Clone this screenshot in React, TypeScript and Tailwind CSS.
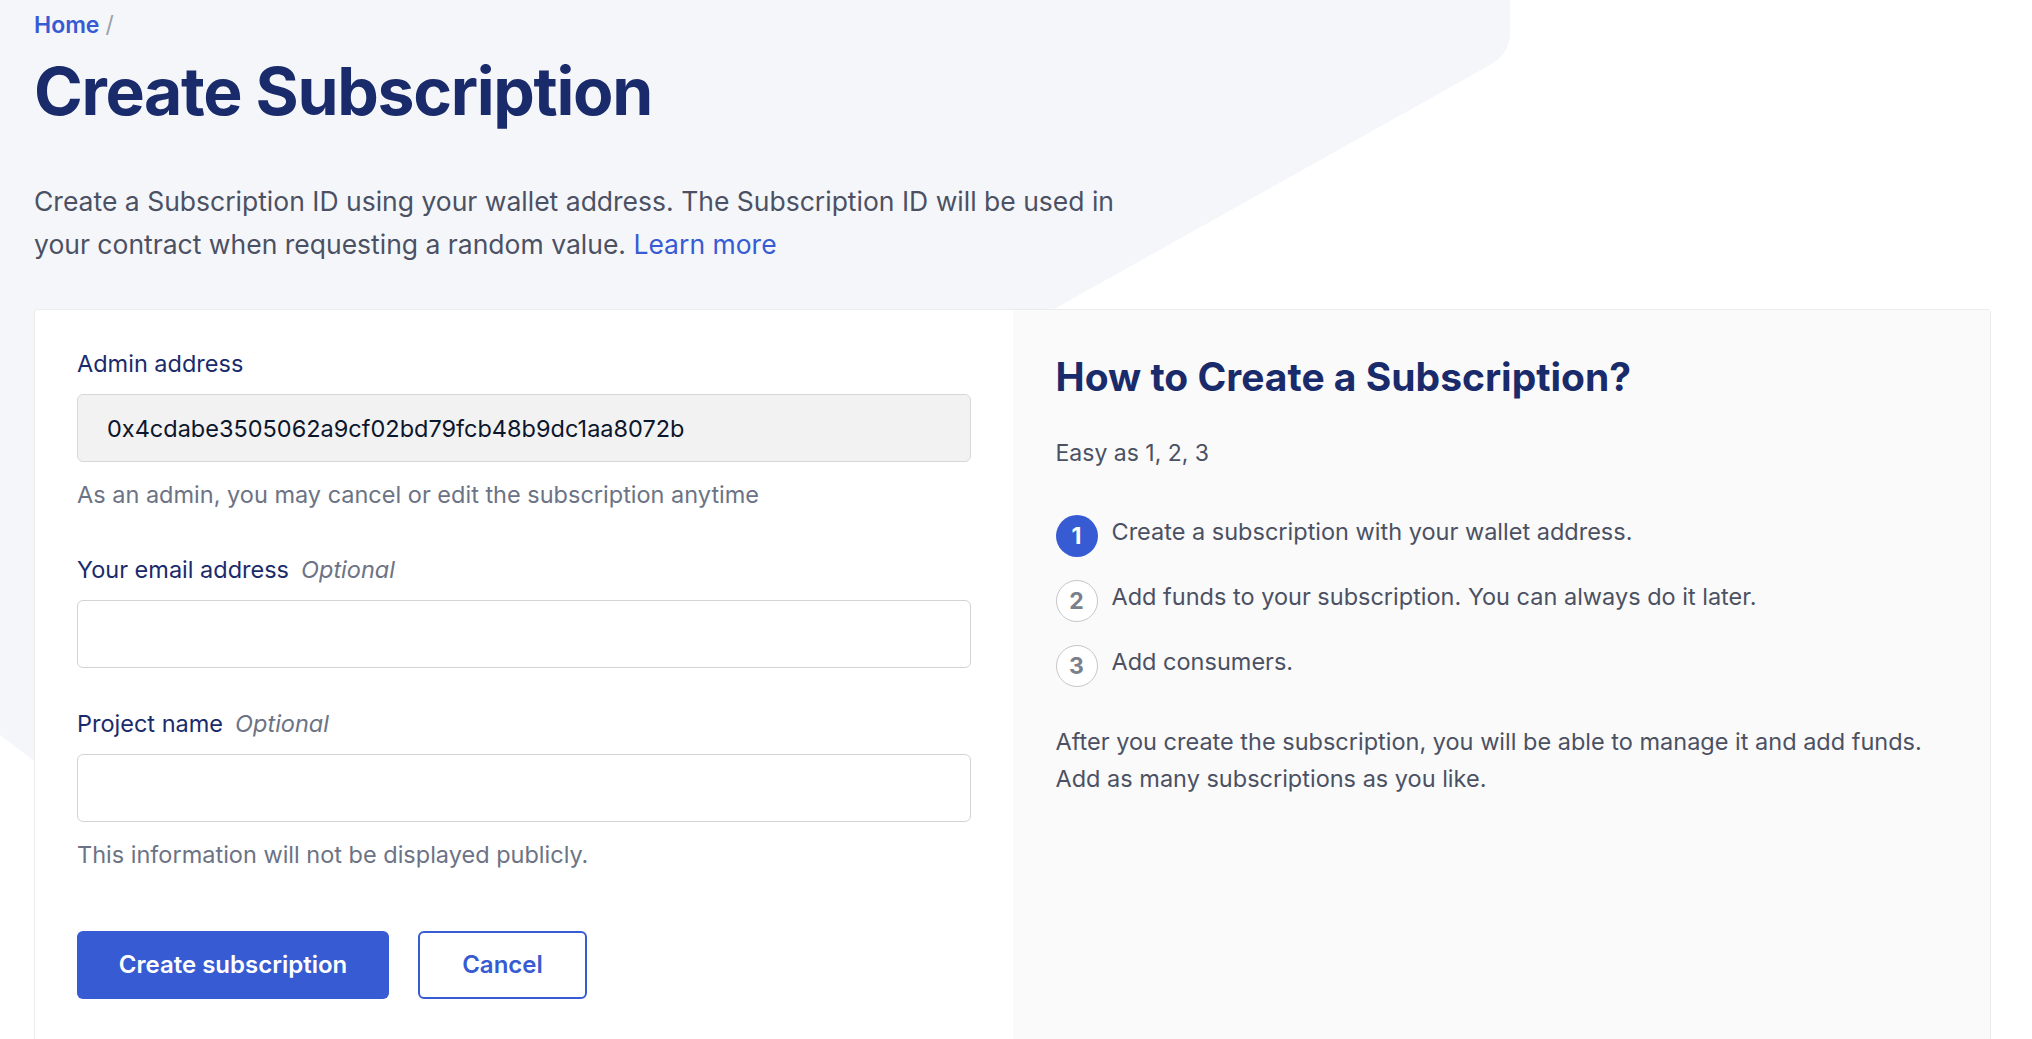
import { useState } from "react";

const steps = [
  "Create a subscription with your wallet address.",
  "Add funds to your subscription. You can always do it later.",
  "Add consumers.",
];

function HexBackdrop() {
  // big rounded hexagon behind the header, only its lower-right corner shows
  return (
    <svg
      className="pointer-events-none absolute left-0 top-0"
      width="2032"
      height="1039"
      viewBox="0 0 2032 1039"
    >
      <path
        d="M0 0 H1510 V32 Q1510 54 1490 65 L1056 308 L400 676 L34 761 L0 735 Z"
        fill="#F5F6FA"
      />
    </svg>
  );
}

function Field({
  label,
  optional,
  value,
  disabled,
  onChange,
}: {
  label: string;
  optional?: boolean;
  value: string;
  disabled?: boolean;
  onChange?: (v: string) => void;
}) {
  return (
    <div>
      <label className="block text-[23.5px] leading-[36px] text-[#1A2B6B]">
        {label}
        {optional && <span className="ml-3 italic text-[#6C7385]">Optional</span>}
      </label>
      <input
        type="text"
        value={value}
        disabled={disabled}
        onChange={(e) => onChange?.(e.target.value)}
        className={`mt-[12px] block h-[68px] w-full rounded-[6px] border px-[29px] text-[23.5px] text-[#0C162C] outline-none ${
          disabled ? "border-[#D7D7D7] bg-[#F2F2F2]" : "border-[#D3D3D8] bg-white"
        }`}
      />
    </div>
  );
}

export default function App() {
  const [email, setEmail] = useState("");
  const [project, setProject] = useState("");

  return (
    <div className="relative min-h-screen overflow-hidden bg-white font-['Inter',sans-serif]">
      <HexBackdrop />

      <div className="relative">
        {/* Header */}
        <div className="px-[34px] pt-[11px]">
          <nav className="text-[23px] leading-[28px] font-semibold">
            <a href="#" className="text-[#375BD2]">Home</a>
            <span className="ml-1.5 font-normal text-[#9AA0AB]">/</span>
          </nav>
          <h1 className="mt-[19px] text-[66px] leading-none font-bold tracking-[-0.02em] text-[#1A2B6B]">
            Create Subscription
          </h1>
          <p className="mt-[56px] max-w-[1110px] text-[26.5px] leading-[43px] text-[#4B5163]">
            Create a Subscription ID using your wallet address. The Subscription ID will be used in
            your contract when requesting a random value.{" "}
            <a href="#" className="text-[#375BD2]">Learn more</a>
          </p>
        </div>

        {/* Card */}
        <div className="ml-[34px] mt-[43px] grid w-[1957px] grid-cols-2 rounded-[3px] border border-[#ECECEC] bg-white">
          <div className="px-[42px] pt-[36px] pb-[48px]">
            <Field label="Admin address" value="0x4cdabe3505062a9cf02bd79fcb48b9dc1aa8072b" disabled />
            <p className="mt-[15px] text-[23.5px] leading-[36px] text-[#6C7385]">
              As an admin, you may cancel or edit the subscription anytime
            </p>

            <div className="mt-[39px]">
              <Field label="Your email address" optional value={email} onChange={setEmail} />
            </div>

            <div className="mt-[38px]">
              <Field label="Project name" optional value={project} onChange={setProject} />
            </div>
            <p className="mt-[15px] text-[23.5px] leading-[36px] text-[#6C7385]">
              This information will not be displayed publicly.
            </p>

            <div className="mt-[58px] flex gap-[29px]">
              <button
                type="button"
                className="h-[68px] w-[312px] rounded-[6px] bg-[#375BD2] text-[24px] font-semibold text-white"
              >
                Create subscription
              </button>
              <button
                type="button"
                className="h-[68px] w-[169px] rounded-[6px] border-2 border-[#375BD2] bg-white text-[24px] font-semibold text-[#375BD2]"
              >
                Cancel
              </button>
            </div>
          </div>

          <div className="bg-[#FAFAFA] px-[43px] pt-[43px]">
            <h2 className="text-[39px] leading-[48px] font-bold text-[#1A2B6B]">
              How to Create a Subscription?
            </h2>
            <p className="mt-[34px] text-[23px] leading-[36px] text-[#4B5163]">Easy as 1, 2, 3</p>

            <ol className="mt-[44px] flex flex-col gap-[23px]">
              {steps.map((s, i) => (
                <li key={s} className="flex items-center gap-[14px]">
                  <span
                    className={`flex h-[42px] w-[42px] shrink-0 items-center justify-center rounded-full text-[23px] font-bold ${
                      i === 0
                        ? "bg-[#375BD2] text-white"
                        : "border border-[#C6C6CC] bg-white text-[#7A7F8C]"
                    }`}
                  >
                    {i + 1}
                  </span>
                  <span className="-mt-2 text-[23.5px] leading-[36px] text-[#4B5163]">{s}</span>
                </li>
              ))}
            </ol>

            <p className="mt-[36px] text-[23.5px] leading-[37px] text-[#4B5163]">
              After you create the subscription, you will be able to manage it and add funds.
              <br />
              Add as many subscriptions as you like.
            </p>
          </div>
        </div>
      </div>
    </div>
  );
}
